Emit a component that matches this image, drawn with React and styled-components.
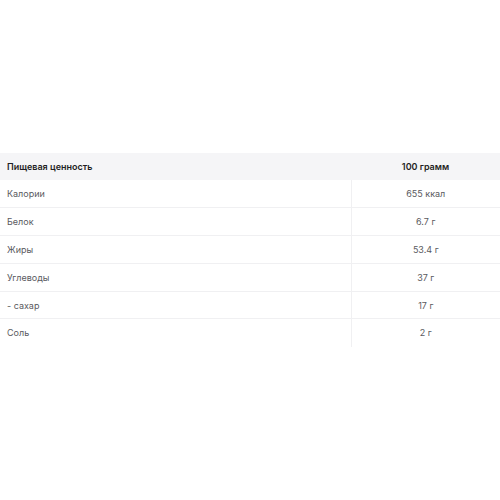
import React from "react";
import styled, { createGlobalStyle } from "styled-components";

const GlobalStyle = createGlobalStyle`
  html, body {
    margin: 0;
    padding: 0;
    background: #fff;
  }
  body {
    font-family: Inter, "Noto Sans", sans-serif;
  }
`;

const Page = styled.div`
  width: 500px;
  height: 500px;
  padding-top: 153px;
  box-sizing: border-box;
`;

const Table = styled.table`
  width: 500px;
  border-collapse: collapse;
  table-layout: fixed;
  font-size: 9px;
`;

const HeadRow = styled.tr`
  background: #f5f5f7;
  height: 27px;
`;

const HeadCell = styled.th`
  font-weight: 600;
  color: #1f1f24;
  padding: 0 7px;
  text-align: ${(p) => (p.$center ? "center" : "left")};
  width: ${(p) => (p.$w ? p.$w : "auto")};
`;

const Row = styled.tr`
  height: 27.8px;
  border-bottom: 1px solid ${(p) => (p.$last ? "transparent" : "#f0f0f2")};
`;

const Cell = styled.td`
  color: #5a5a60;
  padding: 0 7px;
  text-align: ${(p) => (p.$center ? "center" : "left")};
  border-left: ${(p) => (p.$center ? "1px solid #f0f0f2" : "none")};
`;

const rows = [
  ["Калории", "655 ккал"],
  ["Белок", "6.7 г"],
  ["Жиры", "53.4 г"],
  ["Углеводы", "37 г"],
  ["- сахар", "17 г"],
  ["Соль", "2 г"],
];

export default function App() {
  return (
    <Page>
      <GlobalStyle />
      <Table>
        <thead>
          <HeadRow>
            <HeadCell $w="337px">Пищевая ценность</HeadCell>
            <HeadCell $center>100 грамм</HeadCell>
          </HeadRow>
        </thead>
        <tbody>
          {rows.map(([name, value], i) => (
            <Row key={name} $last={i === rows.length - 1}>
              <Cell>{name}</Cell>
              <Cell $center>{value}</Cell>
            </Row>
          ))}
        </tbody>
      </Table>
    </Page>
  );
}
